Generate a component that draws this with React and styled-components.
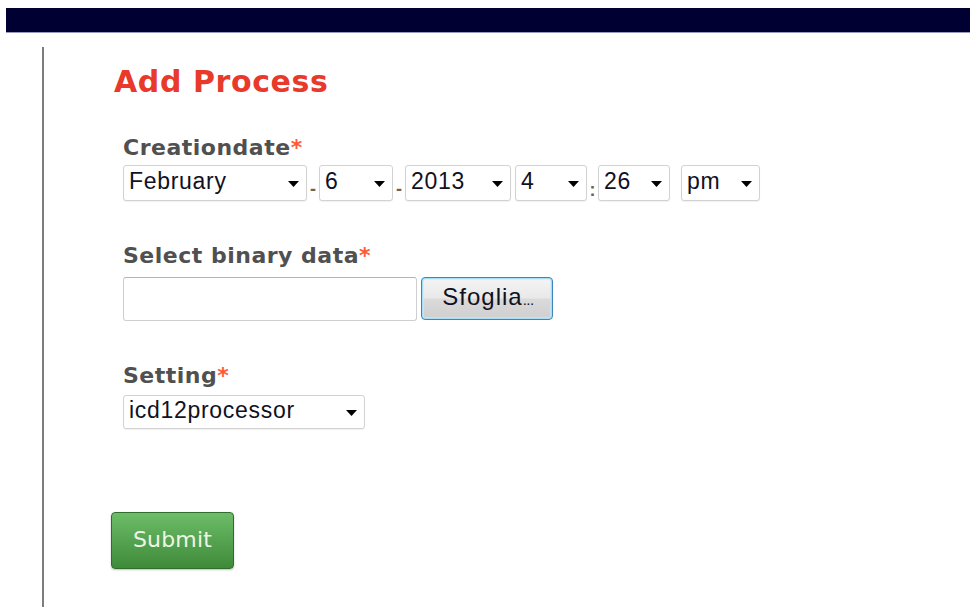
import React from "react";
import styled, { createGlobalStyle } from "styled-components";

const GlobalStyle = createGlobalStyle`
  html, body {
    margin: 0;
    padding: 0;
    background: #ffffff;
  }
  body {
    font-family: "DejaVu Sans", Verdana, sans-serif;
  }
`;

const TopBar = styled.div`
  margin: 8px 0 0 6px;
  height: 24px;
  background: #000033;
  border-bottom: 1px solid #9a9ac0;
`;

const Page = styled.main`
  margin: 14px 0 0 42px;
  min-height: 560px;
  border-left: 2px solid #7d7d7d;
  padding: 19px 0 0 79px;
  box-sizing: border-box;
`;

const Title = styled.h2`
  margin: 0 0 38px -9px;
  font-family: "DejaVu Sans", Verdana, sans-serif;
  font-weight: bold;
  font-size: 30px;
  line-height: 32px;
  letter-spacing: 0.6px;
  color: #e8392a;
`;

const Field = styled.div`
  display: flex;
  flex-direction: column;
  align-items: flex-start;
  gap: ${(p) => p.$gap}px;
  margin-bottom: ${(p) => p.$after}px;
`;

const Label = styled.label`
  font-family: "DejaVu Sans", Verdana, sans-serif;
  font-weight: bold;
  font-size: 22px;
  line-height: 24px;
  letter-spacing: 0.5px;
  color: #505050;
`;

const Required = styled.span`
  color: #ff5a38;
  letter-spacing: 0;
`;

const Row = styled.div`
  display: flex;
  align-items: stretch;
`;

const Select = styled.div`
  display: flex;
  align-items: center;
  justify-content: space-between;
  box-sizing: border-box;
  width: ${(p) => p.$w}px;
  height: ${(p) => p.$h || 36}px;
  padding: 0 7px 4px 5px;
  background: #ffffff;
  border: 1px solid #d2d2d2;
  border-radius: 3px;
  box-shadow: 0 1px 1px rgba(0, 0, 0, 0.06);
  font-family: "Liberation Sans", Arial, sans-serif;
  font-size: 23px;
  letter-spacing: 0.7px;
  color: #111122;
`;

const Caret = styled.svg`
  flex: none;
  width: 11px;
  height: 6px;
  margin-top: 6px;
`;

const Sep = styled.span`
  display: flex;
  align-items: flex-end;
  justify-content: center;
  width: ${(p) => p.$w}px;
  padding-bottom: ${(p) => p.$pb}px;
  font-family: "Liberation Sans", Arial, sans-serif;
  font-weight: bold;
  font-size: 18px;
  line-height: 18px;
  color: #6e6252;
`;

const FileText = styled.div`
  box-sizing: border-box;
  width: 294px;
  height: 44px;
  border: 1px solid #cfcfcf;
  border-top-color: #b4b4b4;
  border-radius: 3px;
  background: #ffffff;
`;

const BrowseButton = styled.button`
  box-sizing: border-box;
  width: 132px;
  height: 43px;
  margin-left: 4px;
  padding: 0 0 3px 2px;
  border: 1px solid #3c86bd;
  border-radius: 4px;
  background: linear-gradient(#f4f4f4 0%, #e9e9e9 48%, #dadada 52%, #cfcfcf 100%);
  box-shadow: inset 0 0 0 1px #a9dcf5, inset 0 0 0 2px rgba(200, 235, 252, 0.6);
  font-family: "Liberation Sans", Arial, sans-serif;
  font-size: 24px;
  letter-spacing: 1px;
  color: #111122;
`;

const Dots = styled.span`
  font-size: 15px;
  letter-spacing: -0.5px;
`;

const SubmitButton = styled.button`
  box-sizing: border-box;
  width: 123px;
  height: 57px;
  margin: 83px 0 0 -12px;
  padding: 0 0 2px;
  border: 1px solid #2f6d2c;
  border-radius: 4px;
  background: linear-gradient(#6dbd68, #3e8a39);
  box-shadow: 0 1px 2px rgba(0, 0, 0, 0.25);
  font-family: "DejaVu Sans", Verdana, sans-serif;
  font-size: 22px;
  letter-spacing: 0.2px;
  color: #eef5e4;
`;

const Arrow = () => (
  <Caret viewBox="0 0 11 6">
    <path d="M0 0 H11 L5.5 6 Z" fill="#000" />
  </Caret>
);

const Dropdown = ({ value, w, h }) => (
  <Select $w={w} $h={h}>
    <span>{value}</span>
    <Arrow />
  </Select>
);

export default function App() {
  return (
    <>
      <GlobalStyle />
      <TopBar />
      <Page>
        <Title>Add Process</Title>

        <Field $gap={5} $after={43}>
          <Label>
            Creationdate<Required>*</Required>
          </Label>
          <Row>
            <Dropdown value="February" w={184} />
            <Sep $w={12} $pb={3}>-</Sep>
            <Dropdown value="6" w={74} />
            <Sep $w={12} $pb={3}>-</Sep>
            <Dropdown value="2013" w={106} />
            <Sep $w={4} $pb={3} />
            <Dropdown value="4" w={72} />
            <Sep $w={11} $pb={2}>:</Sep>
            <Dropdown value="26" w={72} />
            <Sep $w={11} $pb={3} />
            <Dropdown value="pm" w={79} />
          </Row>
        </Field>

        <Field $gap={9} $after={43}>
          <Label>
            Select binary data<Required>*</Required>
          </Label>
          <Row>
            <FileText />
            <BrowseButton type="button">
              Sfoglia<Dots>...</Dots>
            </BrowseButton>
          </Row>
        </Field>

        <Field $gap={7} $after={0}>
          <Label>
            Setting<Required>*</Required>
          </Label>
          <Dropdown value="icd12processor" w={242} h={34} />
        </Field>

        <SubmitButton type="submit">Submit</SubmitButton>
      </Page>
    </>
  );
}
